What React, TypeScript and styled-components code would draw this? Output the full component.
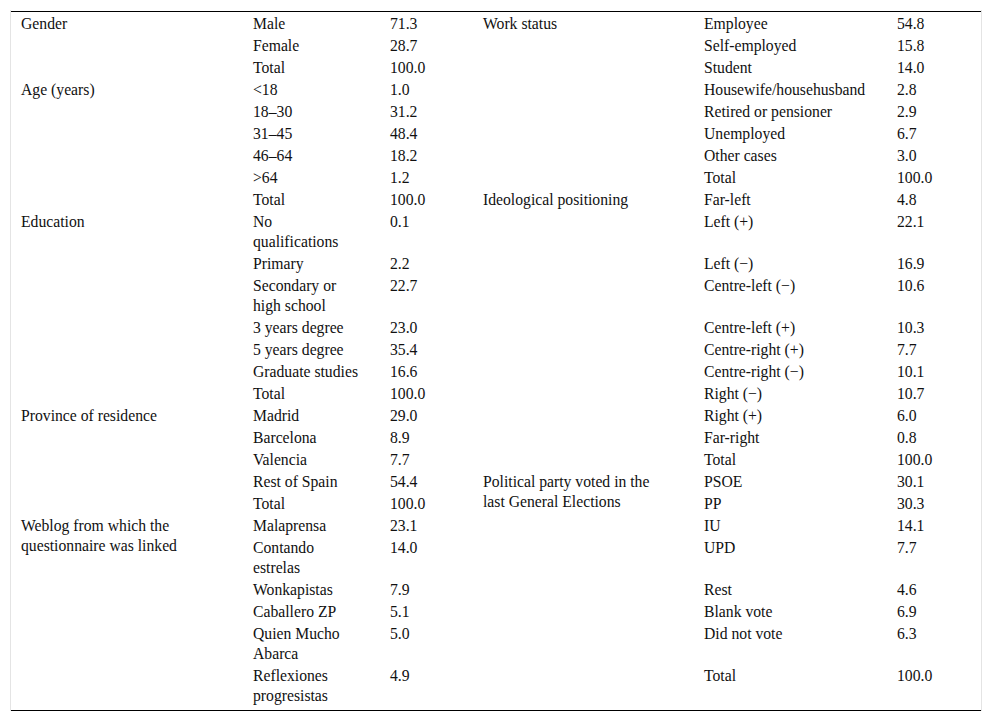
import React from "react";
import styled, { createGlobalStyle } from "styled-components";

const Global = createGlobalStyle`
  html, body { margin: 0; padding: 0; background: #fff; }
  body { font-family: "Liberation Serif", "Times New Roman", serif; color: #000; }
`;

const Frame = styled.div`
  box-sizing: border-box;
  width: 972px;
  margin: 10px 0 0 10px;
  padding-top: 1px;
  border-left: 1px solid #e4e4e4;
  border-right: 1px solid #e4e4e4;
`;

const Rules = styled.div`
  border-top: 1px solid #000;
  border-bottom: 1px solid #000;
  padding-bottom: 4px;
`;

const Table = styled.table`
  width: 970px;
  table-layout: fixed;
  border-collapse: collapse;
  font-family: "Liberation Serif", "Times New Roman", serif;
  font-size: 15.7px;
  line-height: 20px;
  color: #111;
`;

const Col = styled.col<{ $w: number }>`
  width: ${(p) => p.$w}px;
`;

type Kind = "label" | "item" | "value";

const Cell = styled.td<{ $kind: Kind; $padRight: number }>`
  vertical-align: top;
  text-align: left;
  padding: 2px ${(p) => p.$padRight}px 0 10px;
  font-weight: normal;
`;

type Group = { label: string; items: [string, string][] };

const left: Group[] = [
  { label: "Gender", items: [["Male", "71.3"], ["Female", "28.7"], ["Total", "100.0"]] },
  {
    label: "Age (years)",
    items: [["<18", "1.0"], ["18–30", "31.2"], ["31–45", "48.4"], ["46–64", "18.2"], [">64", "1.2"], ["Total", "100.0"]],
  },
  {
    label: "Education",
    items: [
      ["No qualifications", "0.1"],
      ["Primary", "2.2"],
      ["Secondary or high school", "22.7"],
      ["3 years degree", "23.0"],
      ["5 years degree", "35.4"],
      ["Graduate studies", "16.6"],
      ["Total", "100.0"],
    ],
  },
  {
    label: "Province of residence",
    items: [["Madrid", "29.0"], ["Barcelona", "8.9"], ["Valencia", "7.7"], ["Rest of Spain", "54.4"], ["Total", "100.0"]],
  },
  {
    label: "Weblog from which the questionnaire was linked",
    items: [
      ["Malaprensa", "23.1"],
      ["Contando estrelas", "14.0"],
      ["Wonkapistas", "7.9"],
      ["Caballero ZP", "5.1"],
      ["Quien Mucho Abarca", "5.0"],
      ["Reflexiones progresistas", "4.9"],
    ],
  },
];

const right: Group[] = [
  {
    label: "Work status",
    items: [
      ["Employee", "54.8"],
      ["Self-employed", "15.8"],
      ["Student", "14.0"],
      ["Housewife/househusband", "2.8"],
      ["Retired or pensioner", "2.9"],
      ["Unemployed", "6.7"],
      ["Other cases", "3.0"],
      ["Total", "100.0"],
    ],
  },
  {
    label: "Ideological positioning",
    items: [
      ["Far-left", "4.8"],
      ["Left (+)", "22.1"],
      ["Left (\u2212)", "16.9"],
      ["Centre-left (\u2212)", "10.6"],
      ["Centre-left (+)", "10.3"],
      ["Centre-right (+)", "7.7"],
      ["Centre-right (\u2212)", "10.1"],
      ["Right (\u2212)", "10.7"],
      ["Right (+)", "6.0"],
      ["Far-right", "0.8"],
      ["Total", "100.0"],
    ],
  },
  {
    label: "Political party voted in the last General Elections",
    items: [
      ["PSOE", "30.1"],
      ["PP", "30.3"],
      ["IU", "14.1"],
      ["UPD", "7.7"],
      ["Rest", "4.6"],
      ["Blank vote", "6.9"],
      ["Did not vote", "6.3"],
      ["Total", "100.0"],
    ],
  },
];

const widths = [232, 137, 93, 221, 193, 94];

type Slot = { start?: Group; item: [string, string] };

function flatten(groups: Group[]): Slot[] {
  const out: Slot[] = [];
  groups.forEach((g) => g.items.forEach((it, i) => out.push({ start: i === 0 ? g : undefined, item: it })));
  return out;
}

const leftSlots = flatten(left);
const rightSlots = flatten(right);
const rowCount = Math.max(leftSlots.length, rightSlots.length);

function Half({ slot, pads }: { slot: Slot; pads: [number, number, number] }) {
  return (
    <>
      {slot.start && (
        <Cell $kind="label" $padRight={pads[0]} rowSpan={slot.start.items.length}>
          {slot.start.label}
        </Cell>
      )}
      <Cell $kind="item" $padRight={pads[1]}>{slot.item[0]}</Cell>
      <Cell $kind="value" $padRight={pads[2]}>{slot.item[1]}</Cell>
    </>
  );
}

export default function App() {
  return (
    <>
      <Global />
      <Frame>
        <Rules>
          <Table>
            <colgroup>
              {widths.map((w, i) => (
                <Col key={i} $w={w} />
              ))}
            </colgroup>
            <tbody>
              {Array.from({ length: rowCount }, (_, r) => (
                <tr key={r}>
                  <Half slot={leftSlots[r]} pads={[20, 20, 10]} />
                  <Half slot={rightSlots[r]} pads={[25, 10, 10]} />
                </tr>
              ))}
            </tbody>
          </Table>
        </Rules>
      </Frame>
    </>
  );
}
